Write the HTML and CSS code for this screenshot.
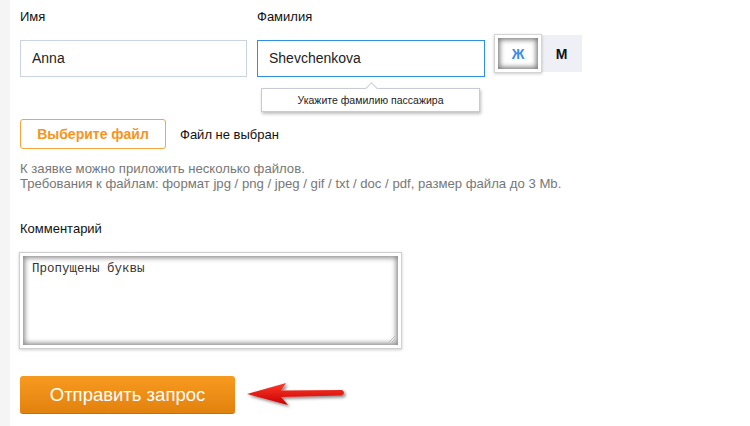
FILE: index.html
```html
<!DOCTYPE html>
<html lang="ru">
<head>
<meta charset="utf-8">
<title>Форма</title>
<link rel="stylesheet" href="styles.css">
</head>
<body>
<div class="page">
  <div class="strip"></div>
  <main class="form">
    <div class="names">
      <div class="field">
        <label class="label">Имя</label>
        <div class="input">Anna</div>
      </div>
      <div class="field field-last">
        <label class="label">Фамилия</label>
        <div class="input input-focus">Shevchenkova</div>
        <div class="tooltip">Укажите фамилию пассажира</div>
      </div>
      <div class="gender">
        <span class="g g-active">Ж</span><span class="g">М</span>
      </div>
    </div>
    <div class="file-row">
      <span class="file-btn">Выберите файл</span>
      <span class="file-none">Файл не выбран</span>
    </div>
    <p class="hint">К заявке можно приложить несколько файлов.<br>Требования к файлам: формат jpg / png / jpeg / gif / txt / doc / pdf, размер файла до 3 Mb.</p>
    <label class="label label-comment">Комментарий</label>
    <div class="textarea">Пропущены буквы<span class="grip"></span></div>
    <div class="submit-row">
      <button class="submit">Отправить запрос</button>
      <svg class="arrow" width="110" height="40" viewBox="0 0 110 40">
        <defs>
          <linearGradient id="ag" x1="0" y1="0" x2="0" y2="1">
            <stop offset="0" stop-color="#ff3a2a"/>
            <stop offset="1" stop-color="#c80000"/>
          </linearGradient>
          <filter id="sh" x="-10%" y="-30%" width="130%" height="170%">
            <feDropShadow dx="2" dy="2" stdDeviation="1.5" flood-color="#000" flood-opacity="0.45"/>
          </filter>
        </defs>
        <path d="M5 19 L44 8 L39 15.5 L100 15 Q104 17.5 100 20.5 L39 22 L46 30 Z" fill="url(#ag)" filter="url(#sh)"/>
      </svg>
    </div>
  </main>
</div>
</body>
</html>
```
FILE: styles.css
```css
html, body {
  margin: 0;
  background: #fff;
}
body {
  font-family: "Liberation Sans", Arial, sans-serif;
  color: #111;
}
.page {
  display: flex;
  min-height: 426px;
}
.strip {
  width: 10px;
  flex: none;
  background: #f5f5f5;
}
.form {
  flex: 1;
  padding: 0 10px;
}
.names {
  display: flex;
  align-items: flex-start;
  gap: 10px;
}
.field {
  position: relative;
  display: flex;
  flex-direction: column;
  width: 227px;
}
.field-last {
  width: 228px;
}
.label {
  display: block;
  font-size: 13px;
  line-height: 18px;
  padding-top: 8px;
  margin-bottom: 14px;
  color: #111;
}
.input {
  box-sizing: border-box;
  height: 37px;
  border: 1px solid #c9d3e2;
  padding: 0 11px;
  font-size: 14px;
  line-height: 35px;
  color: #222;
}
.input-focus {
  border-color: #2f8fe0;
}
.tooltip {
  position: absolute;
  left: 4px;
  top: 88px;
  width: 219px;
  height: 24px;
  box-sizing: border-box;
  border: 1px solid #c6ccd6;
  background: #fff;
  box-shadow: 1px 2px 3px rgba(0, 0, 0, 0.25);
  font-size: 10.5px;
  line-height: 22px;
  text-align: center;
  color: #222;
}
.tooltip::before {
  content: "";
  position: absolute;
  left: 105px;
  top: -5px;
  width: 8px;
  height: 8px;
  background: #fff;
  border-left: 1px solid #c6ccd6;
  border-top: 1px solid #c6ccd6;
  transform: rotate(45deg);
}
.gender {
  display: flex;
  margin-top: 35px;
}
.g {
  box-sizing: border-box;
  display: flex;
  align-items: center;
  justify-content: center;
  width: 41px;
  height: 37px;
  background: #eef0f5;
  font-size: 14px;
  font-weight: bold;
  color: #111;
}
.g-active {
  width: 46px;
  background: #fff;
  color: #3a8ee6;
  border: 3px solid #fff;
  box-shadow: 0 0 0 1px #d4d4d4, 0 1px 3px 1px rgba(0, 0, 0, 0.2), inset 0 0 5px 2px rgba(0, 0, 0, 0.5);
  position: relative;
  z-index: 1;
}
.file-row {
  display: flex;
  align-items: center;
  margin-top: 42px;
}
.file-btn {
  box-sizing: border-box;
  width: 146px;
  height: 30px;
  border: 1px solid #f7a540;
  border-radius: 3px;
  display: flex;
  align-items: center;
  justify-content: center;
  color: #f7941d;
  font-size: 14px;
  font-weight: bold;
}
.file-none {
  margin-left: 14px;
  font-size: 13px;
  color: #111;
}
.hint {
  margin: 12px 0 21px;
  font-size: 13.15px;
  line-height: 15px;
  color: #777;
}
.label-comment {
  margin-bottom: 15px;
}
.textarea {
  position: relative;
  box-sizing: border-box;
  width: 381px;
  height: 95px;
  border: 3px solid #fff;
  box-shadow: 0 0 0 1px #cfcfcf, 0 1px 3px 1px rgba(0, 0, 0, 0.2), inset 0 0 5px 2px rgba(0, 0, 0, 0.45);
  padding: 7px 9px;
  font-family: "Liberation Mono", "Courier New", monospace;
  font-size: 12.5px;
  line-height: 13px;
  color: #333;
}
.grip {
  position: absolute;
  right: 3px;
  bottom: 3px;
  width: 6px;
  height: 6px;
  background: linear-gradient(135deg, transparent 45%, #bbb 45%, #bbb 55%, transparent 55%, transparent 70%, #bbb 70%, #bbb 80%, transparent 80%);
}
.submit-row {
  display: flex;
  align-items: center;
  margin-top: 27px;
}
.submit {
  box-sizing: border-box;
  width: 215px;
  height: 38px;
  border: none;
  border-bottom: 1px solid #c96f08;
  border-radius: 3px;
  background: linear-gradient(#f89a20, #e2820e);
  color: #fff;
  font-family: "Liberation Sans", Arial, sans-serif;
  font-size: 18.5px;
  padding: 0;
}
.arrow {
  margin-left: 7px;
  display: block;
}
```
